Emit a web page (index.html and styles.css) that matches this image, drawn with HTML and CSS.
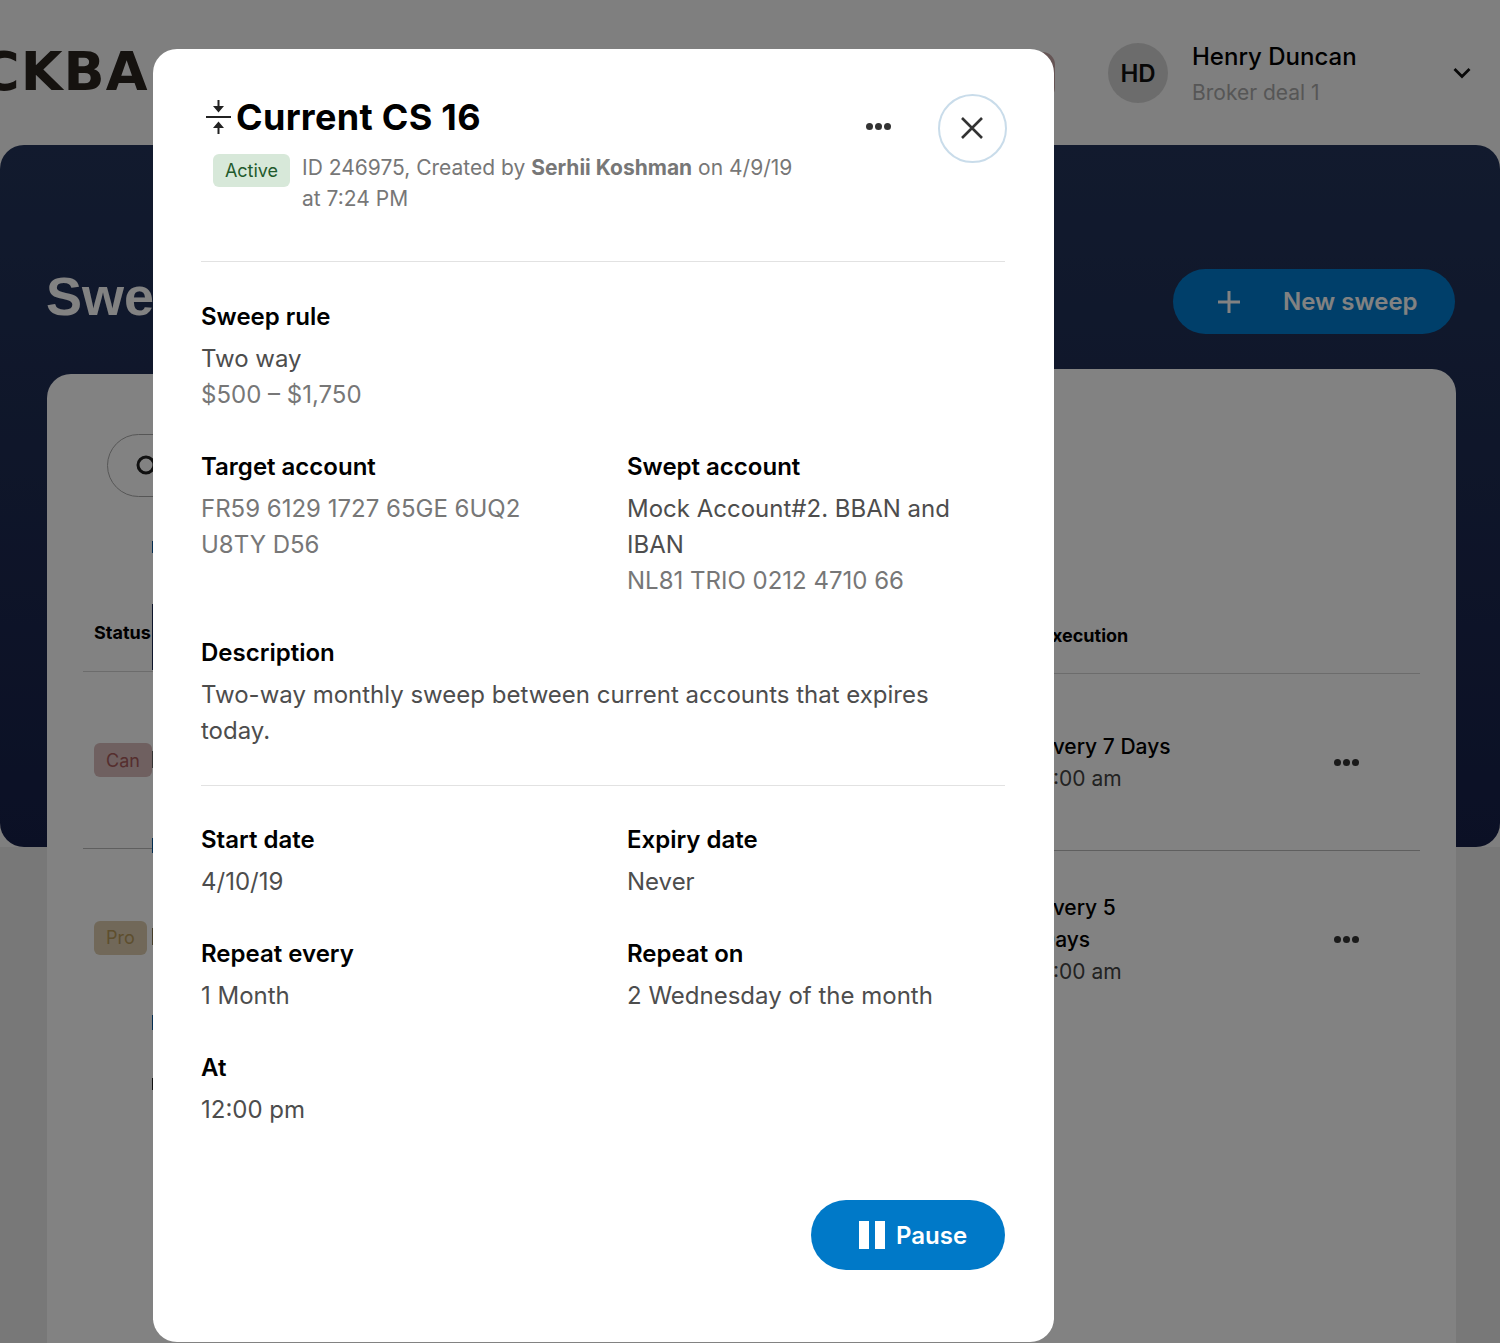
FILE: index.html
```html
<!DOCTYPE html>
<html lang="en">
<head>
<meta charset="utf-8">
<title>Current CS 16</title>
<link rel="stylesheet" href="styles.css">
</head>
<body>
<div class="page">
  <header class="topbar">
    <div class="logo">CKBA</div>
    <div class="user">
      <div class="avatar">HD</div>
      <div class="user-text">
        <div class="user-name">Henry Duncan</div>
        <div class="user-sub">Broker deal 1</div>
      </div>
      <svg class="chevron" viewBox="0 0 18 12" width="18" height="12"><path d="M1.5 2l7.5 7.5L16.5 2" fill="none" stroke="#111" stroke-width="2.8"/></svg>
    </div>
  </header>
  <section class="hero">
    <h1 class="hero-title">Sweeps</h1>
    <button class="new-btn">
      <svg viewBox="0 0 24 24" width="24" height="24"><path d="M12 1v22M1 12h22" stroke="#fff" stroke-width="3" fill="none"/></svg>
      <span>New sweep</span>
    </button>
  </section>
  <div class="cards">
    <section class="card card-left">
      <div class="search">
        <svg viewBox="0 0 24 24" width="24" height="24"><circle cx="11" cy="11" r="8" fill="none" stroke="#222" stroke-width="3"/></svg>
      </div>
      <div class="th th-left">Status</div>
      <div class="row-left row-line"><span class="badge badge-red">Can</span></div>
      <div class="row-left"><span class="badge badge-yellow">Pro</span></div>
    </section>
    <section class="card card-right">
      <div class="th th-right">Execution</div>
      <div class="row-right row-one row-line">
        <div class="exec"><div class="exec-main">Every 7 Days</div><div class="exec-time">8:00 am</div></div>
        <div class="dots"><i></i><i></i><i></i></div>
      </div>
      <div class="row-right row-two">
        <div class="exec"><div class="exec-main">Every 5<br>Days</div><div class="exec-time">8:00 am</div></div>
        <div class="dots"><i></i><i></i><i></i></div>
      </div>
    </section>
  </div>
  <div class="edge-marks"></div>
  <div class="pill-behind"></div>
</div>
<div class="overlay"></div>
<main class="modal">
  <div class="m-head">
    <div class="m-head-main">
      <div class="m-title-row">
        <svg class="m-title-icon" viewBox="0 0 25 34" width="25" height="34">
          <path d="M12.5 0v7M12.5 34v-7M0 17h25" fill="none" stroke="#222" stroke-width="2"/>
          <path d="M7 6h11l-5.5 6.5zM7 28h11l-5.5-6.5z" fill="#222"/>
        </svg>
        <h2 class="m-title">Current CS 16</h2>
      </div>
      <div class="m-meta">
        <span class="active-badge">Active</span>
        <p class="m-meta-text">ID 246975, Created by <b>Serhii Koshman</b> on 4/9/19 at 7:24 PM</p>
      </div>
    </div>
    <div class="dots m-dots"><i></i><i></i><i></i></div>
    <button class="close">
      <svg viewBox="0 0 24 24" width="24" height="24"><path d="M2 2l20 20M22 2L2 22" stroke="#333" stroke-width="2.6" fill="none"/></svg>
    </button>
  </div>
  <div class="m-section m-top">
    <div class="field">
      <div class="label">Sweep rule</div>
      <div class="val">Two way</div>
      <div class="val muted">$500 – $1,750</div>
    </div>
    <div class="two">
      <div class="field">
        <div class="label">Target account</div>
        <div class="val muted">FR59 6129 1727 65GE 6UQ2 U8TY D56</div>
      </div>
      <div class="field">
        <div class="label">Swept account</div>
        <div class="val">Mock Account#2. BBAN and IBAN</div>
        <div class="val muted">NL81 TRIO 0212 4710 66</div>
      </div>
    </div>
    <div class="field">
      <div class="label">Description</div>
      <div class="val val-desc">Two-way monthly sweep between current accounts that expires today.</div>
    </div>
  </div>
  <div class="m-section m-bottom">
    <div class="two">
      <div class="field"><div class="label">Start date</div><div class="val">4/10/19</div></div>
      <div class="field"><div class="label">Expiry date</div><div class="val">Never</div></div>
    </div>
    <div class="two">
      <div class="field"><div class="label">Repeat every</div><div class="val">1 Month</div></div>
      <div class="field"><div class="label">Repeat on</div><div class="val">2 Wednesday of the month</div></div>
    </div>
    <div class="field"><div class="label">At</div><div class="val">12:00 pm</div></div>
  </div>
  <div class="m-foot">
    <button class="pause"><span class="pause-icon"><i></i><i></i></span><span>Pause</span></button>
  </div>
</main>
</body>
</html>
```
FILE: styles.css
```css
* { box-sizing: border-box; }
html, body { margin: 0; padding: 0; height: 1343px; overflow: hidden; }
body { font-family: Inter, "Liberation Sans", sans-serif; color: #111; }
button { font-family: inherit; border: 0; padding: 0; }

.page { position: relative; width: 1500px; height: 1343px; overflow: hidden; background: linear-gradient(#f9f9f9 0 847px, #ececec 847px); }

.topbar { height: 145px; display: flex; justify-content: space-between; }
.logo { margin: 41px 0 0 -20px; font: 700 54px/62px "DejaVu Sans", sans-serif; letter-spacing: 1px; color: #2a241f; height: 62px; }
.user { display: flex; align-items: flex-start; padding: 43px 29px 0 0; }
.avatar { width: 60px; height: 60px; border-radius: 50%; background: #d4d4d4; display: flex; align-items: center; justify-content: center; font-size: 24px; font-weight: 600; color: #111; }
.user-text { margin-left: 24px; width: 261px; }
.user-name { font-size: 24px; line-height: 28px; font-weight: 500; color: #000; }
.user-sub { font-size: 21px; line-height: 28px; margin-top: 8px; color: #aaa; }
.chevron { margin-top: 24px; }

.hero { height: 702px; padding: 124px 45px 0 46px; border-radius: 24px; background: linear-gradient(#24345a, #17214a); display: flex; justify-content: space-between; align-items: flex-start; }
.hero-title { margin: 0; font: 700 54px/54px "Liberation Sans", sans-serif; color: #fff; }
.new-btn { width: 282px; height: 65px; border-radius: 33px; background: #007dd0; color: #fff; display: flex; align-items: center; gap: 42px; padding-left: 44px; font-size: 24px; font-weight: 600; }

.cards { margin-top: -478px; margin-left: 47px; width: 1409px; height: 974px; display: flex; align-items: flex-start; }
.card { background: #fff; height: 100%; }
.card-left { width: 553px; margin-top: 5px; border-top-left-radius: 24px; padding-left: 36px; }
.card-right { width: 856px; border-top-right-radius: 24px; padding-right: 36px; }

.search { margin: 60px 0 0 24px; width: 400px; height: 63px; border: 1px solid #aaa; border-radius: 32px; display: flex; align-items: center; padding-left: 27px; }
.th { font-size: 18px; line-height: 24px; font-weight: 700; color: #000; border-bottom: 1px solid #d4d4d4; display: flex; align-items: flex-end; }
.th-left { height: 175px; padding: 0 0 26px 11px; }
.th-right { height: 305px; padding: 0 0 25px 441px; }
.row-line { border-bottom: 1px solid #bbb; }

.row-left { height: 177px; display: flex; align-items: center; padding-left: 11px; }
.badge { height: 34px; border-radius: 6px; padding: 0 12px; display: flex; align-items: center; font-size: 18px; }
.badge-red { background: #d9bcbc; color: #a85a5a; }
.badge-yellow { background: #ddcdae; color: #b89a5a; }

.row-right { display: flex; align-items: center; justify-content: space-between; padding: 0 61px 0 440px; }
.row-one { height: 177px; }
.row-two { height: 176px; }
.exec { width: 150px; padding-top: 2px; }
.exec-main { font-size: 21px; line-height: 32px; font-weight: 500; color: #000; white-space: nowrap; }
.exec-time { font-size: 21px; line-height: 32px; color: #444; }

.dots { display: flex; gap: 2px; }
.dots i { width: 7px; height: 7px; border-radius: 50%; background: #333; }

.edge-marks { position: absolute; left: 152px; top: 0; width: 1px; height: 1100px; background: linear-gradient(transparent 0 541px, #0b5aa0 541px 553px, transparent 553px 604px, #1a2a55 604px 670px, transparent 670px 751px, #666 751px 768px, transparent 768px 838px, #0b5aa0 838px 853px, transparent 853px 928px, #8a7a55 928px 945px, transparent 945px 1015px, #0b5aa0 1015px 1030px, transparent 1030px 1078px, #222 1078px 1090px, transparent 1090px); }
.pill-behind { position: absolute; left: 1030px; top: 52px; width: 25px; height: 48px; border-radius: 14px; background: #c8a8a8; }

.overlay { position: fixed; inset: 0; background: rgba(0, 0, 0, .49); }

.modal { position: absolute; left: 153px; top: 49px; width: 901px; height: 1293px; padding: 48px 49px 0 48px; background: #fff; border-radius: 24px; }
.modal::before { content: ""; position: absolute; z-index: -1; left: 0; right: 0; top: 0; height: 946px; box-shadow: 0 0 36px rgba(0, 0, 0, .16); }

.m-head { display: flex; align-items: flex-start; height: 165px; border-bottom: 1px solid #e2e2e2; }
.m-head-main { flex: 1; }
.m-title-row { display: flex; align-items: center; height: 40px; gap: 5px; padding-left: 5px; }
.m-title-icon { flex: none; }
.m-title { margin: 0; font-size: 36px; line-height: 40px; font-weight: 700; color: #000; letter-spacing: .3px; }
.m-meta { display: flex; align-items: flex-start; margin: 15px 0 0 12px; }
.active-badge { flex: none; width: 77px; height: 33px; margin-top: 2px; background: #d7e8d9; color: #1f5a2c; border-radius: 6px; font-size: 18px; display: flex; align-items: center; justify-content: center; }
.m-meta-text { margin: 0 0 0 12px; width: 510px; font-size: 21px; line-height: 31px; color: #777; }
.m-meta-text b { font-weight: 700; }
.m-dots { margin: 26px 47px 0 0; }
.close { flex: none; width: 69px; height: 69px; margin: -3px -2px 0 0; border-radius: 50%; border: 2px solid #c9dcea; background: #fff; display: flex; align-items: center; justify-content: center; padding: 0 2px 2px 0; }

.m-section { display: flex; flex-direction: column; gap: 36px; }
.m-top { padding: 37px 0 36px; border-bottom: 1px solid #e2e2e2; }
.m-bottom { padding-top: 36px; }
.two { display: grid; grid-template-columns: 378px 378px; column-gap: 48px; }
.label { font-size: 24px; line-height: 36px; font-weight: 600; color: #000; margin-bottom: 6px; }
.val { font-size: 24px; line-height: 36px; color: #4d4d4d; }
.val.muted { color: #777; }
.val-desc { max-width: 780px; }

.m-foot { display: flex; justify-content: flex-end; margin-top: 72px; }
.pause { width: 194px; height: 70px; border-radius: 35px; background: #0079c8; color: #fff; display: flex; align-items: center; padding-left: 48px; gap: 11px; font-size: 24px; font-weight: 600; }
.pause-icon { display: flex; gap: 6px; }
.pause-icon i { width: 10px; height: 28px; background: #fff; }
```
